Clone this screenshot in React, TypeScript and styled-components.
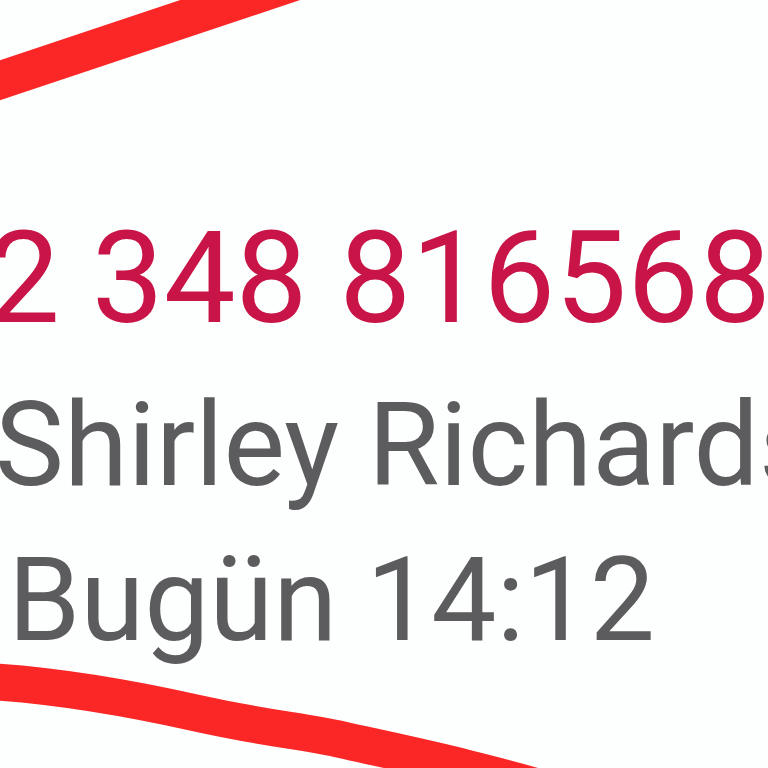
import React from 'react';
import styled, { createGlobalStyle } from 'styled-components';

const GlobalStyle = createGlobalStyle`
  html, body {
    margin: 0;
    padding: 0;
    background: #ffffff;
  }
`;

const Page = styled.div`
  position: relative;
  width: 768px;
  height: 768px;
  overflow: hidden;
  background: #fdfefe;
  font-family: Roboto, "Noto Sans", sans-serif;
`;

const Details = styled.div`
  display: flex;
  flex-direction: column;
  padding-top: 214px;
  white-space: nowrap;
`;

const Line = styled.div<{ $size: number; $color: string; $indent: number; $gap: number }>`
  font-size: ${(p) => p.$size}px;
  line-height: 1;
  height: ${(p) => p.$size}px;
  color: ${(p) => p.$color};
  margin-left: ${(p) => p.$indent}px;
  margin-top: ${(p) => p.$gap}px;
  font-weight: 400;
`;

const Marker = styled.svg`
  position: absolute;
  inset: 0;
  pointer-events: none;
`;

function App() {
  return (
    <>
      <GlobalStyle />
      <Page>
        <Details>
          <Line $size={128} $color="#c81446" $indent={-12} $gap={0}>
            2 348 816568
          </Line>
          <Line $size={116} $color="#5c5c5e" $indent={-5} $gap={45}>
            Shirley Richards
          </Line>
          <Line $size={116} $color="#5c5c5e" $indent={8} $gap={39}>
            Bugün 14:12
          </Line>
        </Details>

        {/* marker strokes drawn over the screenshot */}
        <Marker width="768" height="768" viewBox="0 0 768 768">
          <path
            d="M -20 87 L 300 -20"
            stroke="#fb2626"
            strokeWidth="38"
            strokeLinecap="round"
            fill="none"
          />
          <path
            d="M -20 681 C 40 684, 120 696, 196 713 S 300 730, 343 740 S 480 768, 580 800"
            stroke="#fb2626"
            strokeWidth="37"
            strokeLinecap="round"
            fill="none"
          />
        </Marker>
      </Page>
    </>
  );
}

export default App;
